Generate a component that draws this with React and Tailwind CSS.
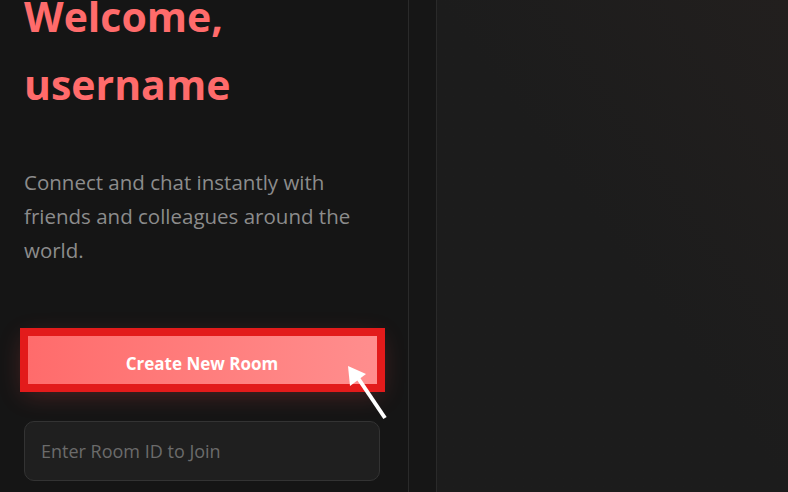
export default function App() {
  return (
    <div
      className="flex h-screen w-full overflow-hidden bg-[#151515]"
      style={{ fontFamily: '"Open Sans", "Noto Sans", sans-serif' }}
    >
      <div className="relative w-[409px] shrink-0 border-r border-[#2a2a2a] bg-[#151515] pl-6 pr-[28px]">
        <h1 className="mt-[-18px] text-[41px] font-bold leading-[68px] text-[#ff6b6b]">
          Welcome,
          <br />
          username
        </h1>
        <p className="mt-[47px] text-[20.5px] leading-[34px] text-[#8c8c8c]">
          Connect and chat instantly with friends and colleagues around the world.
        </p>
        <div className="relative mt-[65px]">
          <button className="h-[56px] w-full bg-gradient-to-r from-[#ff6b6b] to-[#ff8e8e] pt-2 text-[17px] font-bold text-white shadow-[0_6px_24px_rgba(255,80,80,0.25)]">
            Create New Room
          </button>
          <div className="pointer-events-none absolute -bottom-[4px] -left-[4px] -right-[5px] -top-[4px] border-[8px] border-[#e31b1b]" />
        </div>
        <input
          className="mt-[33px] h-[60px] w-full rounded-[10px] border border-[#333333] bg-[#1f1f1f] px-4 text-[18px] text-white outline-none placeholder:text-[#6b6b6b]"
          placeholder="Enter Room ID to Join"
        />
        <svg
          className="pointer-events-none absolute left-0 top-0"
          width="409"
          height="492"
          viewBox="0 0 409 492"
        >
          <line x1="385" y1="418" x2="358" y2="378" stroke="white" strokeWidth="4" />
          <polygon points="348,366 350,386 366,374" fill="white" />
        </svg>
      </div>
      <div className="w-[28px] shrink-0 border-r border-[#2a2a2a] bg-[#161616]" />
      <div className="flex-1 bg-gradient-to-bl from-[#221f1e] via-[#1c1c1c] to-[#1c1c1c]" />
    </div>
  );
}
